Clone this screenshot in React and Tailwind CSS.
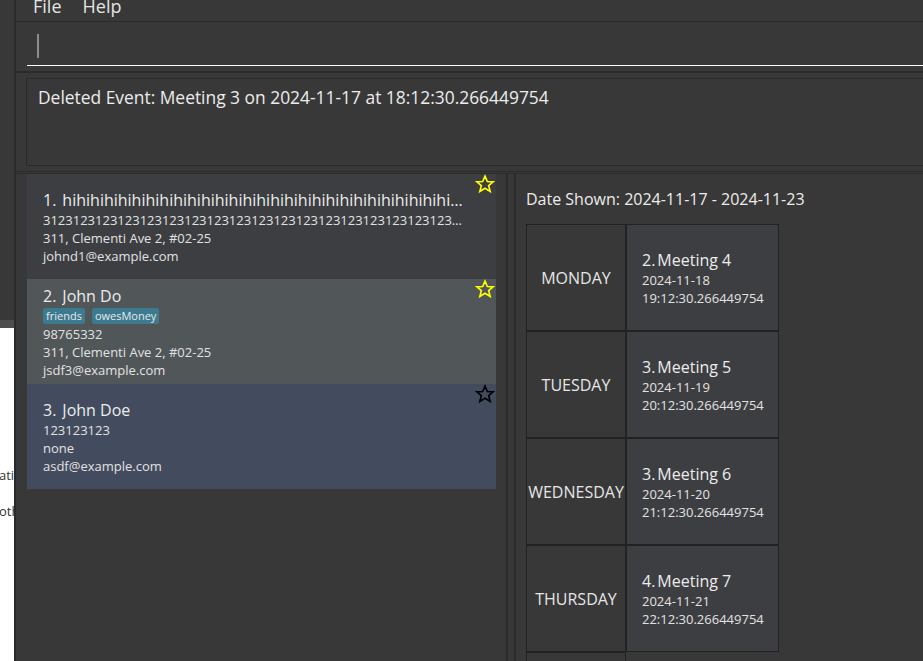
import React from 'react';

const Star = ({ color }) => (
  <svg width="20" height="20" viewBox="0 0 24 24" className="absolute top-0 right-[1px]">
    <polygon
      points="12,2.5 14.8,9 21.8,9.4 16.4,14 18.2,21 12,17.2 5.8,21 7.6,14 2.2,9.4 9.2,9"
      fill="none"
      stroke={color}
      strokeWidth="2"
      strokeLinejoin="miter"
    />
  </svg>
);

const persons = [
  {
    idx: 1,
    name: 'hihihihihihihihihihihihihihihihihihihihihihihihihihihihihihihihihihihihihi',
    phone: '312312312312312312312312312312312312312312312312312312312312312312312312',
    address: '311, Clementi Ave 2, #02-25',
    email: 'johnd1@example.com',
    tags: [],
    bg: 'bg-[#3c3e41]',
    star: '#ffff00',
  },
  {
    idx: 2,
    name: 'John Do',
    phone: '98765332',
    address: '311, Clementi Ave 2, #02-25',
    email: 'jsdf3@example.com',
    tags: ['friends', 'owesMoney'],
    bg: 'bg-[#515659]',
    star: '#ffff00',
  },
  {
    idx: 3,
    name: 'John Doe',
    phone: '123123123',
    address: 'none',
    email: 'asdf@example.com',
    tags: [],
    bg: 'bg-[#424c5e]',
    star: '#000000',
  },
];

const days = [
  { day: 'MONDAY', idx: 2, title: 'Meeting 4', date: '2024-11-18', time: '19:12:30.266449754' },
  { day: 'TUESDAY', idx: 3, title: 'Meeting 5', date: '2024-11-19', time: '20:12:30.266449754' },
  { day: 'WEDNESDAY', idx: 3, title: 'Meeting 6', date: '2024-11-20', time: '21:12:30.266449754' },
  { day: 'THURSDAY', idx: 4, title: 'Meeting 7', date: '2024-11-21', time: '22:12:30.266449754' },
  { day: 'FRIDAY', idx: null },
];

const PersonCard = ({ p }) => (
  <div className={`relative h-[105px] flex flex-col justify-center pl-[16px] ${p.bg}`}>
    <Star color={p.star} />
    <div className="flex text-[16px] leading-[22px] text-[#ececec] w-[426px] whitespace-nowrap">
      <span>{p.idx}.</span>
      <span className="ml-[6px] truncate">{p.name}</span>
    </div>
    {p.tags.length > 0 && (
      <div className="flex gap-[7px] mt-[1px] mb-[1px]">
        {p.tags.map(t => (
          <span key={t} className="h-[16px] px-[3px] bg-[#3d7a8f] text-[11px] leading-[16px] text-[#e8e8e8] rounded-[2px]">
            {t}
          </span>
        ))}
      </div>
    )}
    <div className="text-[13px] leading-[18px] text-[#e2e2e2] w-[421px] truncate">{p.phone}</div>
    <div className="text-[13px] leading-[18px] text-[#e2e2e2]">{p.address}</div>
    <div className="text-[13px] leading-[18px] text-[#e2e2e2]">{p.email}</div>
  </div>
);

export default function App() {
  return (
    <div
      className="flex w-[923px] h-[661px] overflow-hidden bg-[#383838]"
      style={{ fontFamily: '"Open Sans", "Noto Sans", sans-serif' }}
    >
      {/* window behind */}
      <div className="w-[14px] flex flex-col shrink-0">
        <div className="h-[320px] bg-[#383838]" />
        <div className="h-[8px] bg-[#4e4e4e]" />
        <div className="flex-1 bg-white overflow-hidden text-[13px] leading-[18px] text-[#333] pt-[138px] whitespace-nowrap">
          <div className="ml-[-1px]">atio</div>
          <div className="ml-[-1px] mt-[18px]">othe</div>
        </div>
      </div>
      <div className="w-[2px] bg-[#2a2a2a] shrink-0" />

      {/* main window */}
      <div className="flex-1 flex flex-col min-w-0">
        {/* menu bar */}
        <div className="h-[22px] overflow-hidden border-b border-[#2b2b2b] shrink-0">
          <div className="flex gap-[21px] pl-[17px] mt-[-6px] text-[18px] leading-[24px] text-[#e4e4e4]">
            <span>File</span>
            <span>Help</span>
          </div>
        </div>

        {/* command box */}
        <div className="h-[51px] pl-[11px] pt-[12px] shrink-0 border-b-2 border-[#2b2b2b]">
          <div className="ml-[10px] w-[2px] h-[24px] bg-[#8c8c8c]" />
          <div className="mt-[7px] h-px bg-white" />
        </div>

        {/* result display */}
        <div className="pl-[10px] pt-[5px] shrink-0">
          <div className="h-[88px] border border-r-0 border-[#2a2a2a] pl-[11px] pt-[6px] text-[17.4px] leading-[24px] text-[#ececec] whitespace-nowrap">
            Deleted Event: Meeting 3 on 2024-11-17 at 18:12:30.266449754
          </div>
        </div>
        <div className="mt-[5px] h-px bg-[#2b2b2b] shrink-0" />
        <div className="mt-px h-px bg-[#2b2b2b] shrink-0" />

        {/* panels */}
        <div className="flex-1 flex min-h-0">
          <div className="w-[490px] pl-[11px] pr-[10px] shrink-0 bg-[#383838]">
            {persons.map(p => (
              <PersonCard key={p.idx} p={p} />
            ))}
          </div>
          <div className="w-[2px] bg-[#2c2c2c] shrink-0" />
          <div className="w-[6px] shrink-0" />
          <div className="w-[2px] bg-[#2c2c2c] shrink-0" />
          <div className="flex-1 pl-[10px] pt-[14px] overflow-hidden">
            <div className="text-[16px] leading-[22px] text-[#ececec] whitespace-nowrap">
              Date Shown: 2024-11-17 - 2024-11-23
            </div>
            <div className="mt-[14px] flex flex-col">
              {days.map(d => (
                <div key={d.day} className="flex">
                  <div className="w-[100px] h-[107px] shrink-0 border border-[#222222] flex items-center justify-center text-[16px] text-[#e6e6e6]">
                    {d.day}
                  </div>
                  {d.idx && (
                    <div className="w-[153px] h-[107px] shrink-0 border border-[#222222] bg-[#3d3e41] pl-[15px] flex flex-col justify-center">
                      <div className="flex text-[16px] leading-[22px] text-[#ececec]">
                        <span>{d.idx}.</span>
                        <span className="ml-[2px]">{d.title}</span>
                      </div>
                      <div className="text-[13px] leading-[18px] text-[#e2e2e2]">{d.date}</div>
                      <div className="text-[13px] leading-[18px] text-[#e2e2e2]">{d.time}</div>
                    </div>
                  )}
                </div>
              ))}
            </div>
          </div>
        </div>
      </div>
    </div>
  );
}
